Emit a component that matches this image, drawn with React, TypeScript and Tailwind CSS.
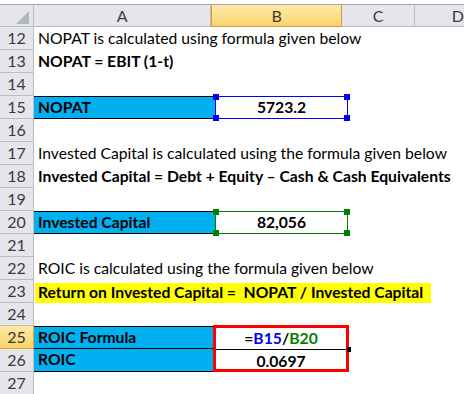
import React from "react";

const font = { fontFamily: "Lato, 'Open Sans', sans-serif" };

function RowHead({ n, active }: { n: number; active?: boolean }) {
  return (
    <div
      className={`w-[34px] h-[23px] shrink-0 flex items-center justify-center border-r border-b text-[16px] ${
        active
          ? "bg-gradient-to-b from-[#fde9a6] to-[#f9d46b] border-[#e0a43e] text-[#333]"
          : "bg-[#e4e6ea] border-[#b9bdc3] text-[#3b3b3b]"
      }`}
    >
      {n}
    </div>
  );
}

function Handles({ color }: { color: string }) {
  const base = `absolute w-[6px] h-[6px] ${color}`;
  return (
    <>
      <span className={`${base} -left-[3px] -top-[3px]`} />
      <span className={`${base} -right-[3px] -top-[3px]`} />
      <span className={`${base} -left-[3px] -bottom-[3px]`} />
      <span className={`${base} -right-[3px] -bottom-[3px]`} />
    </>
  );
}

function TextRow({ n, children, bold }: { n: number; children?: React.ReactNode; bold?: boolean }) {
  return (
    <div className="flex h-[23px]">
      <RowHead n={n} />
      <div className={`flex-1 flex items-center pl-[4px] whitespace-nowrap text-[15.7px] text-black ${bold ? "font-bold" : ""}`}>
        {children}
      </div>
    </div>
  );
}

function CellRow({ n, label, value, sel }: { n: number; label: string; value: string; sel: "blue" | "green" }) {
  const border = sel === "blue" ? "border-[#0000ff]" : "border-[#008000]";
  const handle = sel === "blue" ? "bg-[#0000ff]" : "bg-[#008000]";
  return (
    <div className="flex h-[23px]">
      <RowHead n={n} />
      <div className="w-[181px] h-full bg-[#00b0f0] border-y border-black flex items-center pl-[4px] text-[15.7px] font-bold text-black">
        {label}
      </div>
      <div className={`relative w-[133px] h-full border ${border} flex items-center justify-center text-[15.7px] font-bold text-black`}>
        {value}
        <Handles color={handle} />
      </div>
    </div>
  );
}

export default function App() {
  return (
    <div className="w-[464px] h-[394px] overflow-hidden bg-white" style={font}>
      {/* column headers */}
      <div className="pt-[4px]">
        <div className="flex h-[23px] border-t border-[#9fa3a9] text-[16px] text-[#3b3b3b]">
          <div className="w-[34px] shrink-0 bg-[#e4e6ea] border-r border-b border-[#b9bdc3] relative">
            <svg width="34" height="22" className="absolute left-0 top-0">
              <polygon points="29,6 29,19 16,19" fill="#b3b6bb" />
            </svg>
          </div>
          <div className="w-[181px] bg-[#e4e6ea] border-r border-b border-[#b9bdc3] flex items-center justify-center">A</div>
          <div className="w-[134px] bg-gradient-to-b from-[#fde9a6] to-[#f9d46b] border-x border-b border-[#d99a3a] flex items-center justify-center">
            B
          </div>
          <div className="w-[74px] bg-[#e4e6ea] border-r border-b border-[#b9bdc3] flex items-center justify-center">C</div>
          <div className="flex-1 bg-[#e4e6ea] border-b border-[#b9bdc3] flex items-center pl-[37px]">D</div>
        </div>
      </div>

      <TextRow n={12}>NOPAT is calculated using formula given below</TextRow>
      <TextRow n={13} bold>NOPAT = EBIT (1-t)</TextRow>
      <TextRow n={14} />
      <CellRow n={15} label="NOPAT" value="5723.2" sel="blue" />
      <TextRow n={16} />
      <TextRow n={17}>Invested Capital is calculated using the formula given below</TextRow>
      <TextRow n={18} bold>Invested Capital = Debt + Equity – Cash &amp; Cash Equivalents</TextRow>
      <TextRow n={19} />
      <CellRow n={20} label="Invested Capital" value="82,056" sel="green" />
      <TextRow n={21} />
      <TextRow n={22}>ROIC is calculated using the formula given below</TextRow>
      <div className="flex h-[23px]">
        <RowHead n={23} />
        <div className="flex-1 flex items-end">
          <div className="w-[396px] h-[20px] ml-[1px] bg-[#ffff00] flex items-center pl-[3px] whitespace-nowrap text-[15.7px] font-bold text-black">
            Return on Invested Capital =&nbsp; NOPAT / Invested Capital
          </div>
        </div>
      </div>
      <TextRow n={24} />

      {/* rows 25-26 */}
      <div className="flex">
        <div className="flex flex-col">
          <RowHead n={25} active />
          <RowHead n={26} />
        </div>
        <div className="w-[181px] flex flex-col bg-[#00b0f0] border-y border-black text-[15.7px] font-bold text-black">
          <div className="h-[22px] border-b border-black flex items-center pl-[4px]">ROIC Formula</div>
          <div className="h-[22px] flex items-center pl-[4px]">ROIC</div>
        </div>
        <div className="relative -ml-[2px] -mt-[1px] w-[136px] h-[47px] border-[3px] border-[#ff0000] flex flex-col text-[15.7px] font-bold text-black">
          <div className="h-[22px] border-b border-black flex items-center justify-center">
            =<span className="text-[#0000ff]">B15</span>/<span className="text-[#008000]">B20</span>
          </div>
          <div className="flex-1 flex items-center justify-center">0.0697</div>
          <span className="absolute -right-[5px] top-[19px] w-[4px] h-[5px] bg-black" />
        </div>
      </div>
      <TextRow n={27} />
    </div>
  );
}
